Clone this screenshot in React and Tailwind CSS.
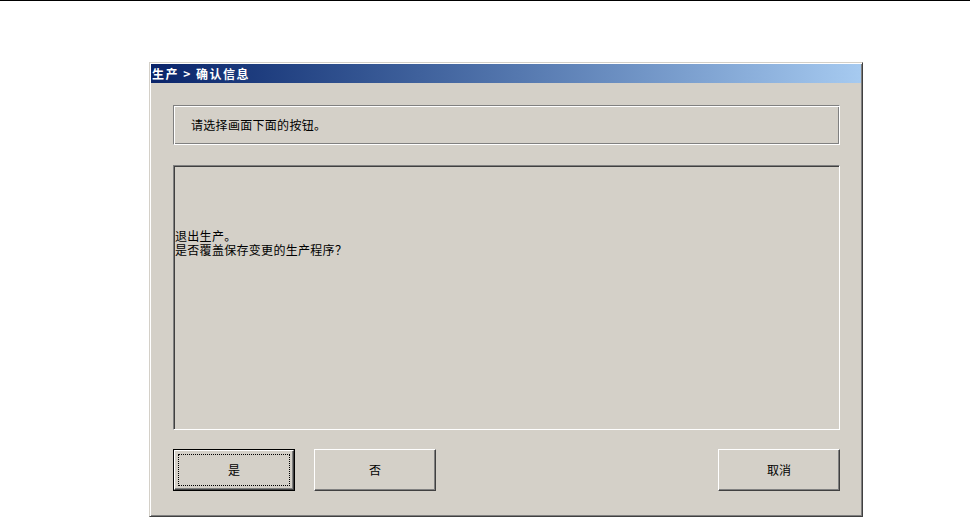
const FONT = { fontFamily: '"Noto Sans CJK SC", "Liberation Sans", sans-serif' }

function WinButton({ label, isDefault }) {
  if (isDefault) {
    return (
      <button className="w-[122px] h-[42px] border border-black bg-[#d4d0c8] p-0">
        <div className="w-full h-full border border-t-white border-l-white border-r-[#404040] border-b-[#404040] shadow-[inset_-1px_-1px_0_#808080] p-[3px]">
          <div className="w-full h-full border border-dotted border-black flex items-center justify-center text-[12px] leading-[12px] text-black">
            {label}
          </div>
        </div>
      </button>
    )
  }
  return (
    <button className="w-[122px] h-[42px] border border-t-white border-l-white border-r-[#404040] border-b-[#404040] shadow-[inset_-1px_-1px_0_#808080,inset_1px_1px_0_#d4d0c8] bg-[#d4d0c8] flex items-center justify-center text-[12px] leading-[12px] text-black">
      {label}
    </button>
  )
}

export default function App() {
  return (
    <div className="w-[970px] h-[517px] bg-white border-t border-black overflow-hidden" style={FONT}>
      <div className="ml-[149px] mt-[61px] w-[714px] h-[455px] bg-[#d4d0c8] border border-t-[#d4d0c8] border-l-[#d4d0c8] border-r-[#404040] border-b-[#404040] shadow-[inset_1px_1px_0_#fff,inset_-1px_-1px_0_#808080] p-[1px]">
        <div className="h-[19px] bg-linear-to-r from-[#0a246a] to-[#a6caf0] text-white font-bold text-[12px] leading-[19px] pl-[1px] tracking-[1.5px] whitespace-pre">
          生产 &gt; 确认信息
        </div>

        <div className="pl-[22px] pt-[22px]">
          <div className="w-[667px] h-[40px] border border-t-[#808080] border-l-[#808080] border-r-white border-b-white shadow-[inset_1px_1px_0_#fff,inset_-1px_-1px_0_#808080] flex items-center pl-[17px] text-[12px] text-black tracking-[0.3px]">
            请选择画面下面的按钮。
          </div>

          <div className="mt-[20px] w-[667px] h-[265px] border border-t-[#808080] border-l-[#808080] border-r-white border-b-white shadow-[inset_1px_1px_0_#404040,inset_-1px_-1px_0_#d4d0c8] pt-[63px] pl-[1px] text-[12px] leading-[14px] text-black tracking-[0.3px]">
            <p>退出生产。</p>
            <p>是否覆盖保存变更的生产程序？</p>
          </div>

          <div className="mt-[19px] w-[667px] flex">
            <WinButton label="是" isDefault />
            <div className="ml-[19px]">
              <WinButton label="否" />
            </div>
            <div className="ml-auto">
              <WinButton label="取消" />
            </div>
          </div>
        </div>
      </div>
    </div>
  )
}
